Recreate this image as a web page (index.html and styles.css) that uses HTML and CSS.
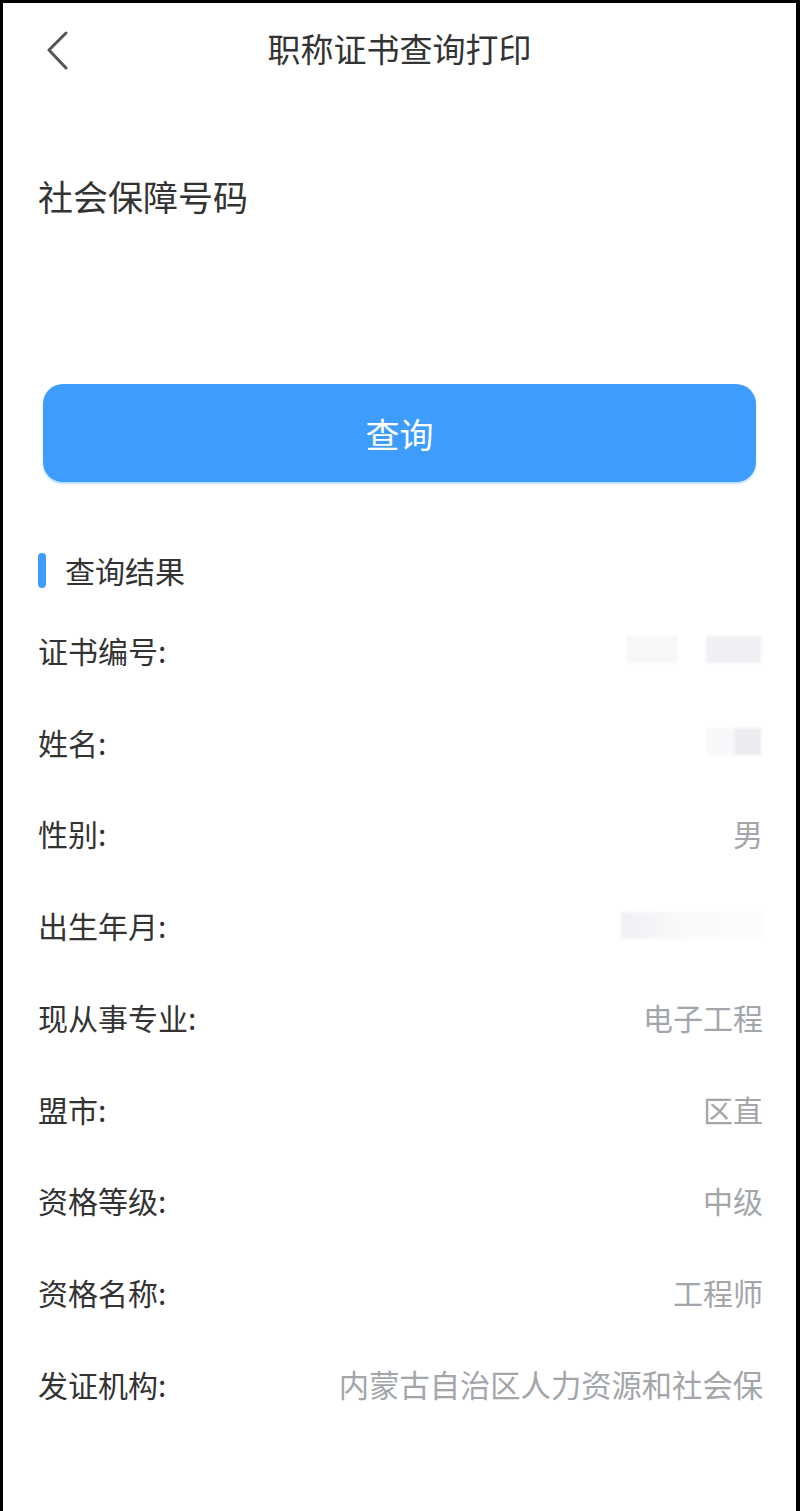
FILE: index.html
```html
<!DOCTYPE html>
<html lang="zh-CN">
<head>
    <meta charset="UTF-8">
    <meta name="viewport" content="width=device-width, initial-scale=1.0">
    <title>职称证书查询打印</title>
    <link rel="stylesheet" href="styles.css">
</head>
<body>

<div class="screen">
    <!-- Top bar -->
    <div class="topbar">
        <span class="back">
            <svg width="24" height="40" viewBox="0 0 24 40">
                <polyline points="20,2 3,19 20,37" fill="none" stroke="#555" stroke-width="3" stroke-linecap="round" stroke-linejoin="round"/>
            </svg>
        </span>
        <h1 class="title">职称证书查询打印</h1>
    </div>

    <!-- Search field -->
    <div class="field">
        <label for="ssn">社会保障号码</label>
        <input type="text" id="ssn">
    </div>

    <button class="searchBtn" type="button">查询</button>

    <!-- Result list -->
    <div class="sectionHead">
        <span class="mark"></span>
        <span>查询结果</span>
    </div>

    <div class="row">
        <span class="label">证书编号:</span>
        <span class="value">
            <span class="blur blur-a"></span>
            <span class="blur blur-b"></span>
        </span>
    </div>
    <div class="row">
        <span class="label">姓名:</span>
        <span class="value">
            <span class="blur blur-c"></span>
            <span class="blur blur-d"></span>
        </span>
    </div>
    <div class="row">
        <span class="label">性别:</span>
        <span class="value">男</span>
    </div>
    <div class="row">
        <span class="label">出生年月:</span>
        <span class="value">
            <span class="blur blur-e"></span>
        </span>
    </div>
    <div class="row">
        <span class="label">现从事专业:</span>
        <span class="value">电子工程</span>
    </div>
    <div class="row">
        <span class="label">盟市:</span>
        <span class="value">区直</span>
    </div>
    <div class="row">
        <span class="label">资格等级:</span>
        <span class="value">中级</span>
    </div>
    <div class="row">
        <span class="label">资格名称:</span>
        <span class="value">工程师</span>
    </div>
    <div class="row">
        <span class="label">发证机构:</span>
        <span class="value long">内蒙古自治区人力资源和社会保</span>
    </div>
</div>

</body>
</html>
```

FILE: styles.css
```css
/* Page frame */
body {
    margin: 0;
    background: #000;
    font-family: "Noto Sans CJK SC", "Noto Sans", sans-serif;
    color: #333;
}

.screen {
    margin: 3px 4px 0 3px;
    min-height: 1508px;
    background: #fff;
    padding: 0 35px;
    box-sizing: border-box;
}

/* Top bar */
.topbar {
    height: 94px;
    box-sizing: border-box;
    padding-bottom: 4px;
    display: flex;
    align-items: center;
    justify-content: center;
    position: relative;
}

.back {
    position: absolute;
    left: 8px;
    top: 28px;
    display: flex;
}

.title {
    margin: 0;
    font-size: 33px;
    font-weight: normal;
    color: #333;
    line-height: 40px;
}

/* Search field */
.field {
    margin-top: 79px;
    height: 208px;
}

.field label {
    display: block;
    font-size: 35px;
    line-height: 40px;
    color: #333;
}

.field input {
    border: none;
    outline: none;
    width: 100%;
    height: 60px;
    font-size: 30px;
    background: transparent;
}

/* Search button */
.searchBtn {
    display: block;
    width: calc(100% - 10px);
    margin: 0 5px;
    height: 98px;
    border: none;
    border-radius: 20px;
    background: #3d9cfc;
    color: #fff;
    font-family: inherit;
    font-size: 34px;
    box-shadow: 0 2px 2px rgba(61, 156, 252, 0.35);
}

/* Section header */
.sectionHead {
    margin-top: 70px;
    margin-bottom: 16px;
    height: 36px;
    display: flex;
    align-items: center;
    gap: 19px;
    font-size: 30px;
    line-height: 36px;
}

.mark {
    width: 8px;
    height: 35px;
    border-radius: 4px;
    background: #3d9cfc;
}

/* Result rows */
.row {
    height: 91.75px;
    display: flex;
    align-items: center;
    justify-content: space-between;
    font-size: 30px;
}

.label {
    color: #333;
    white-space: nowrap;
}

.value {
    color: #a2a6aa;
    display: flex;
    align-items: center;
    white-space: nowrap;
    margin-right: -2px;
}

.value.long {
    font-size: 30.3px;
}

/* Masked values */
.blur {
    display: inline-block;
    height: 27px;
    filter: blur(1.5px);
}

.blur-a { width: 52px; background: #f6f7f9; margin-right: 28px; }
.blur-b { width: 55px; background: #eef0f3; margin-right: 2px; }
.blur-c { width: 28px; background: #f7f8fa; }
.blur-d { width: 27px; background: #eaecef; margin-right: 2px; }
.blur-e { width: 143px; background: linear-gradient(90deg, #eef0f3, #f8f9fa 40%, #fcfcfd); margin-right: -1px; }
```
